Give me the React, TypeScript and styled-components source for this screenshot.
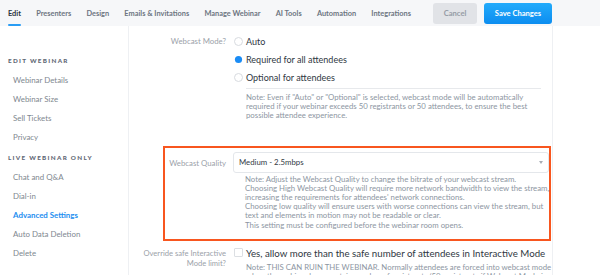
import React from "react";
import styled, { createGlobalStyle } from "styled-components";

const Global = createGlobalStyle`
  html, body { margin: 0; padding: 0; background: #ffffff; }
  body { font-family: Lato, "Open Sans", sans-serif; }
  * { box-sizing: border-box; }
`;

const Page = styled.div`
  width: 600px;
  height: 275px;
  overflow: hidden;
  display: flex;
  flex-direction: column;
`;

const TopBar = styled.div`
  height: 26px;
  background: #f6f7f9;
  display: flex;
  align-items: stretch;
  padding-left: 8px;
  flex-shrink: 0;
`;

const Tabs = styled.div`
  display: flex;
  gap: 15.2px;
  align-items: stretch;
`;

const Tab = styled.div<{ $active?: boolean }>`
  position: relative;
  display: flex;
  align-items: center;
  font-size: 7.4px;
  font-weight: 700;
  color: ${(p) => (p.$active ? "#2b3440" : "#6d7581")};
  white-space: nowrap;
  &::after {
    content: "";
    display: ${(p) => (p.$active ? "block" : "none")};
    position: absolute;
    left: 0;
    right: 0;
    bottom: 0;
    height: 2px;
    background: #2a9df4;
    border-radius: 1px;
  }
`;

const Actions = styled.div`
  margin-left: auto;
  margin-right: 48px;
  display: flex;
  align-items: center;
  gap: 7px;
`;

const Button = styled.button<{ $primary?: boolean }>`
  height: 21px;
  width: ${(p) => (p.$primary ? "68px" : "44px")};
  border: none;
  border-radius: 3px;
  padding: 0;
  font-family: Lato, sans-serif;
  font-size: 7.6px;
  font-weight: 700;
  white-space: nowrap;
  color: ${(p) => (p.$primary ? "#ffffff" : "#959ca5")};
  background: ${(p) =>
    p.$primary ? "linear-gradient(180deg, #22abfb 0%, #0c8df0 100%)" : "#e1e3e7"};
`;

const Body = styled.div`
  flex: 1;
  display: flex;
  min-height: 0;
`;

const Sidebar = styled.div`
  width: 129px;
  border-right: 1px solid #eef0f3;
  padding: 25px 0 0 8px;
  display: flex;
  flex-direction: column;
  flex-shrink: 0;
`;

const SectionTitle = styled.div<{ $gap?: boolean }>`
  font-size: 6.3px;
  font-weight: 900;
  letter-spacing: 1.3px;
  color: #5f6875;
  text-transform: uppercase;
  height: 19px;
  margin-top: ${(p) => (p.$gap ? "2px" : "0")};
  display: flex;
  align-items: center;
`;

const NavItem = styled.div<{ $active?: boolean }>`
  height: 19px;
  display: flex;
  align-items: center;
  padding-left: 5px;
  font-size: 7.9px;
  font-weight: ${(p) => (p.$active ? 700 : 400)};
  color: ${(p) => (p.$active ? "#1d8ef0" : "#80888f")};
`;

const Main = styled.div`
  width: 424px;
  border-right: 1px solid #eef0f3;
  padding-top: 10px;
  display: flex;
  flex-direction: column;
  flex-shrink: 0;
`;

const Row = styled.div`
  display: grid;
  grid-template-columns: 97px 1fr;
  column-gap: 8px;
  padding-right: 11px;
`;

const Label = styled.div`
  text-align: right;
  font-size: 7.8px;
  color: #9ba1a9;
  line-height: 10px;
`;

const Options = styled.div`
  display: flex;
  flex-direction: column;
  gap: 8px;
`;

const Option = styled.div`
  display: flex;
  align-items: center;
  gap: 3px;
  height: 10px;
  font-size: 9px;
  color: #2f3742;
`;

const Radio = styled.span<{ $checked?: boolean }>`
  width: 9px;
  height: 9px;
  border-radius: 50%;
  flex-shrink: 0;
  border: ${(p) => (p.$checked ? "none" : "1px solid #d8dbe0")};
  background: ${(p) => (p.$checked ? "#1a8cf5" : "#ffffff")};
  transform: scale(${(p) => (p.$checked ? 0.8 : 1)});
`;

const Note = styled.div<{ $rule?: boolean }>`
  margin-left: 12px;
  font-size: 7.8px;
  line-height: 9.2px;
  color: #8d96a2;
  white-space: nowrap;
  border-top: ${(p) => (p.$rule ? "1px solid #e7e9ec" : "none")};
  padding-top: ${(p) => (p.$rule ? "4px" : "2px")};
`;

const Spacer = styled.div`
  height: 6px;
`;

const Highlight = styled.div`
  margin: 25px 0 0 34px;
  width: 388px;
  border: 2px solid #f8561f;
  padding: 4px 8px 9px 0;
  display: grid;
  grid-template-columns: 61px 1fr;
  column-gap: 7px;
`;

const Select = styled.div`
  height: 21px;
  border: 1px solid #e4e7eb;
  border-radius: 3px;
  display: flex;
  align-items: center;
  justify-content: space-between;
  padding: 0 5px 0 5px;
  font-size: 7.8px;
  color: #333b45;
`;

const Caret = styled.span`
  width: 0;
  height: 0;
  border-left: 2.5px solid transparent;
  border-right: 2.5px solid transparent;
  border-top: 3px solid #a7adb5;
`;

const QualityLabel = styled(Label)`
  padding-top: 6px;
`;

const BottomRow = styled(Row)`
  margin-top: 7px;
`;

const BottomLabel = styled(Label)`
  font-size: 7.6px;
`;

const CheckRow = styled.div`
  display: flex;
  align-items: center;
  gap: 3px;
  font-size: 9.7px;
  color: #2f3742;
  height: 10px;
  white-space: nowrap;
`;

const Checkbox = styled.span`
  width: 9px;
  height: 9px;
  border: 1px solid #dcdfe3;
  border-radius: 1px;
  flex-shrink: 0;
`;

const Rest = styled.div`
  flex: 1;
  background: #ffffff;
`;

const BottomNote = styled(Note)`
  padding-top: 5px;
`;

export default function App() {
  return (
    <Page>
      <Global />
      <TopBar>
        <Tabs>
          <Tab $active>Edit</Tab>
          <Tab>Presenters</Tab>
          <Tab>Design</Tab>
          <Tab>Emails &amp; Invitations</Tab>
          <Tab>Manage Webinar</Tab>
          <Tab>AI Tools</Tab>
          <Tab>Automation</Tab>
          <Tab>Integrations</Tab>
        </Tabs>
        <Actions>
          <Button>Cancel</Button>
          <Button $primary>Save Changes</Button>
        </Actions>
      </TopBar>
      <Body>
        <Sidebar>
          <SectionTitle>Edit Webinar</SectionTitle>
          <NavItem>Webinar Details</NavItem>
          <NavItem>Webinar Size</NavItem>
          <NavItem>Sell Tickets</NavItem>
          <NavItem>Privacy</NavItem>
          <SectionTitle $gap>Live Webinar Only</SectionTitle>
          <NavItem>Chat and Q&amp;A</NavItem>
          <NavItem>Dial-in</NavItem>
          <NavItem $active>Advanced Settings</NavItem>
          <NavItem>Auto Data Deletion</NavItem>
          <NavItem>Delete</NavItem>
        </Sidebar>
        <Main>
          <Row>
            <Label>Webcast Mode?</Label>
            <div>
              <Options>
                <Option>
                  <Radio />
                  Auto
                </Option>
                <Option>
                  <Radio $checked />
                  Required for all attendees
                </Option>
                <Option>
                  <Radio />
                  Optional for attendees
                </Option>
              </Options>
              <Spacer />
              <Note $rule>
                Note: Even if "Auto" or "Optional" is selected, webcast mode will be automatically
                <br />
                required if your webinar exceeds 50 registrants or 50 attendees, to ensure the best
                <br />
                possible attendee experience.
              </Note>
            </div>
          </Row>
          <Highlight>
            <QualityLabel>Webcast Quality</QualityLabel>
            <div>
              <Select>
                Medium - 2.5mbps
                <Caret />
              </Select>
              <Note>
                Note: Adjust the Webcast Quality to change the bitrate of your webcast stream.
                <br />
                Choosing High Webcast Quality will require more network bandwidth to view the stream,
                <br />
                increasing the requirements for attendees' network connections.
                <br />
                Choosing low quality will ensure users with worse connections can view the stream, but
                <br />
                text and elements in motion may not be readable or clear.
                <br />
                This setting must be configured before the webinar room opens.
              </Note>
            </div>
          </Highlight>
          <BottomRow>
            <BottomLabel>
              Override safe Interactive
              <br />
              Mode limit?
            </BottomLabel>
            <div>
              <CheckRow>
                <Checkbox />
                Yes, allow more than the safe number of attendees in Interactive Mode
              </CheckRow>
              <BottomNote>
                Note: THIS CAN RUIN THE WEBINAR. Normally attendees are forced into webcast mode
                <br />
                when the webinar has a certain number of registrants (50 registrants if Webcast Mode is
              </BottomNote>
            </div>
          </BottomRow>
        </Main>
        <Rest />
      </Body>
    </Page>
  );
}
